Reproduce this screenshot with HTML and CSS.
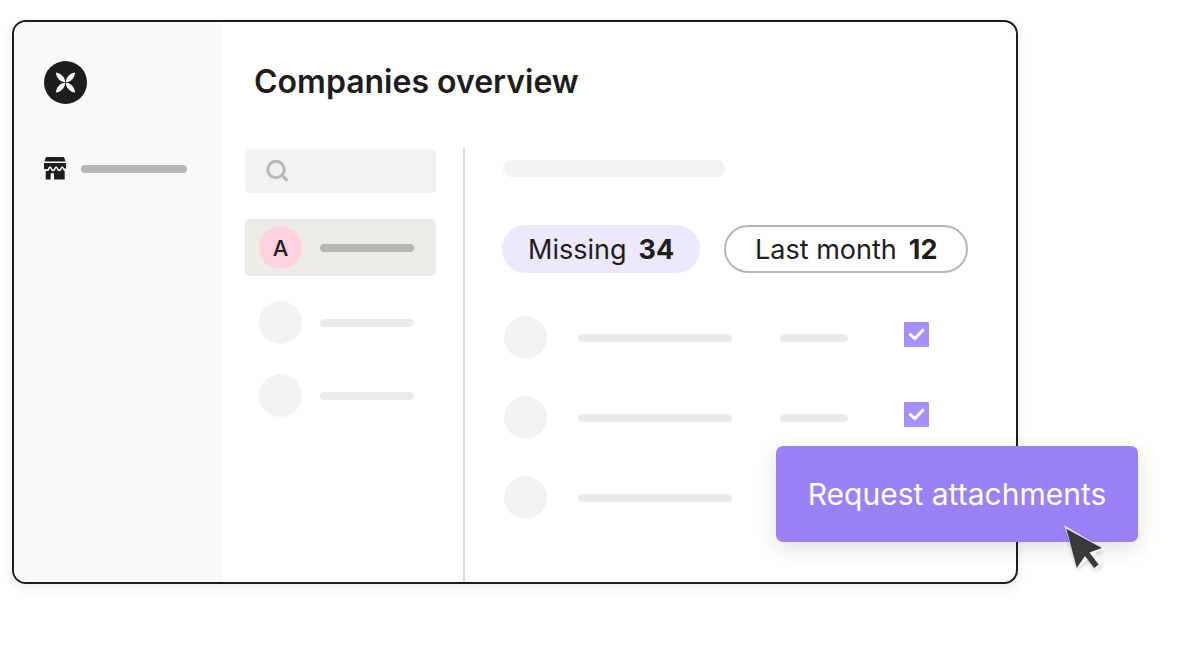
FILE: index.html
```
<!DOCTYPE html>
<html lang="en">
<head>
<meta charset="utf-8">
<title>Companies overview</title>
<link rel="stylesheet" href="styles.css">
</head>
<body>
<div class="window">
  <aside class="sidebar">
    <svg class="logo" viewBox="0 0 43 43" aria-hidden="true">
      <circle cx="21.500" cy="21.500" r="21.500" fill="#1d1d1b"/>
      <g fill="#fff">
        <path d="M21.200 21.200C21.200 16.800 17.500 12 11.900 11.400C12.300 16.900 16.600 21.200 21.200 21.200Z"/>
        <path d="M21.800 21.200C21.800 16.800 25.500 12 31.100 11.400C30.700 16.900 26.400 21.200 21.800 21.200Z"/>
        <path d="M21.200 21.800C21.200 26.200 17.500 31 11.900 31.600C12.300 26.100 16.600 21.800 21.200 21.800Z"/>
        <path d="M21.800 21.800C21.800 26.200 25.500 31 31.100 31.600C30.700 26.100 26.400 21.800 21.800 21.800Z"/>
      </g>
    </svg>
    <a class="nav-link" href="#" aria-label="Companies">
      <svg class="store" viewBox="0 0 22 23" aria-hidden="true">
        <g fill="#1d1d1b">
          <path d="M3 0H19Q20 0 20.400 1L21.500 4.500H0.500L1.600 1Q2 0 3 0Z"/>
          <path d="M0 6H22V11.500H20.200C19.500 8.800 17.200 8.900 16.400 11.300C15.800 13.200 14.700 13.200 14 11.300C13.200 8.900 11.200 8.900 10.300 11.300C9.600 13.200 8.600 13.200 7.900 11.300C7.100 8.900 4.900 8.900 4.100 11.300C3.700 12.600 2.900 12.800 2.100 12H0Z"/>
          <path d="M1.700 14C3.500 14.700 4.900 13.800 5.500 12C5.900 10.700 6.200 10.700 6.600 12C7.600 14.900 10.500 14.900 11.600 12C12.100 10.700 12.300 10.700 12.800 12C13.800 14.900 16.700 14.900 17.700 12C18.100 10.700 18.400 10.700 18.800 12C19.200 13.200 19.800 13.800 20.700 14V22.500H10V16.200H6.700V22.500H1.700Z"/>
        </g>
      </svg>
      <span class="bar bar-strong"></span>
    </a>
  </aside>
  <main class="main">
    <h1 class="title">Companies overview</h1>
    <div class="columns">
      <section class="companies">
        <label class="search">
          <svg class="search-icon" viewBox="0 0 24 24" aria-hidden="true">
            <circle cx="11" cy="10.500" r="8.200"/>
            <path d="M17.200 16.700L21.500 20.800"/>
          </svg>
          <input class="search-input" type="search" aria-label="Search companies">
        </label>
        <ul class="company-list">
          <li><button class="company company-active" type="button" aria-label="Company A"><span class="avatar avatar-pink">A</span><span class="bar bar-strong"></span></button></li>
          <li><button class="company" type="button" aria-label="Company 2"><span class="avatar"></span><span class="bar"></span></button></li>
          <li><button class="company" type="button" aria-label="Company 3"><span class="avatar"></span><span class="bar"></span></button></li>
        </ul>
      </section>
      <section class="detail">
        <div class="heading-bar"></div>
        <div class="filters">
          <button class="pill pill-active" type="button">Missing <b>34</b></button>
          <button class="pill" type="button">Last month <b>12</b></button>
        </div>
        <ul class="rows">
          <li class="row">
            <span class="avatar"></span><span class="bar"></span><span class="bar"></span>
            <span class="check"><input class="check-box" type="checkbox" aria-label="Select row 1" checked><svg class="check-mark" viewBox="0 0 25 25" aria-hidden="true"><path d="M6.300 12.500L10.800 16.600L18.800 8.200"/></svg></span>
          </li>
          <li class="row">
            <span class="avatar"></span><span class="bar"></span><span class="bar"></span>
            <span class="check"><input class="check-box" type="checkbox" aria-label="Select row 2" checked><svg class="check-mark" viewBox="0 0 25 25" aria-hidden="true"><path d="M6.300 12.500L10.800 16.600L18.800 8.200"/></svg></span>
          </li>
          <li class="row">
            <span class="avatar"></span><span class="bar"></span>
          </li>
        </ul>
      </section>
    </div>
  </main>
  <button class="request" type="button">Request attachments
    <svg class="cursor" viewBox="0 0 48 56" aria-hidden="true">
      <path d="M4 4L44 28L35.500 32L43 42.500L36 49L28.500 38L18 47Z" fill="#fff" fill-opacity="0.800"/>
      <path d="M6.300 7.700L42 27L29.500 31.500L38.600 43.500L34.200 47L25 35L16.800 46.700Z" fill="#373a39"/>
    </svg>
  </button>
</div>
</body>
</html>
```
FILE: styles.css
```
* {
  box-sizing: border-box;
}

body {
  margin: 0;
  padding: 20px 167px 84px 12px;
  background: #fff;
  color: #1d1d1b;
  font-family: Inter, "Liberation Sans", sans-serif;
}

button {
  font: inherit;
  color: inherit;
  border: 0;
  background: none;
  cursor: pointer;
}

ul {
  margin: 0;
  padding: 0;
  list-style: none;
}

.window {
  position: relative;
  display: flex;
  border: 2px solid #1d1d1b;
  border-radius: 14px;
  background: #fff;
  box-shadow: 0 4px 12px rgba(0, 0, 0, 0.08);
}

.sidebar {
  flex: 0 0 208px;
  padding: 39px 35px 0 30px;
  border-radius: 12px 0 0 12px;
  background: #f9f9f7;
}

.logo {
  display: block;
  width: 43px;
  height: 43px;
}

.nav-link {
  display: flex;
  align-items: center;
  gap: 15px;
  margin-top: 53px;
}

.store {
  flex: none;
  width: 22px;
  height: 23px;
}

.bar {
  flex: 1;
  height: 8px;
  border-radius: 4px;
  background: #ebece7;
}

.bar-strong {
  background: #b6b6b4;
}

.main {
  flex: 1;
  min-width: 0;
  padding-top: 40px;
}

.title {
  margin: 0 0 46px;
  padding-left: 32px;
  font-size: 32px;
  line-height: 40px;
  font-weight: 600;
}

.columns {
  display: flex;
}

.companies {
  flex: 0 0 243px;
  padding: 1px 27px 0 23px;
  border-right: 2px solid #dcdcdc;
}

.search {
  display: flex;
  align-items: center;
  gap: 12px;
  height: 44px;
  padding: 0 20px;
  border-radius: 5px;
  background: #f2f2f0;
}

.search-icon {
  flex: none;
  width: 24px;
  height: 24px;
  fill: none;
  stroke: #b6b6b4;
  stroke-width: 3;
  stroke-linecap: round;
}

.search-input {
  width: 100%;
  min-width: 0;
  border: 0;
  outline: 0;
  background: transparent;
  font: inherit;
  font-size: 16px;
}

.company-list {
  display: grid;
  gap: 16px;
  margin-top: 26px;
}

.company {
  display: flex;
  align-items: center;
  gap: 18px;
  width: 100%;
  height: 57px;
  padding: 4px 22px 0 14px;
  border-radius: 5px;
}

.company-active {
  padding-top: 0;
  background: #ebece7;
}

.avatar {
  display: grid;
  place-items: center;
  flex: none;
  width: 43px;
  height: 43px;
  border-radius: 50%;
  background: #f2f2f0;
  font-size: 22px;
  font-weight: 500;
}

.avatar-pink {
  background: #ffd2e0;
}

.detail {
  flex: 1;
  min-width: 0;
  height: 434px;
  padding: 12px 48px 0 37px;
}

.heading-bar {
  width: 222px;
  height: 17px;
  margin-left: 1px;
  border-radius: 9px;
  background: #f2f2f0;
}

.filters {
  display: flex;
  gap: 24px;
  margin-top: 48px;
}

.pill {
  display: flex;
  align-items: center;
  justify-content: center;
  gap: 12px;
  flex: 244 0 0;
  height: 48px;
  padding: 0;
  border: 2px solid #b6b6b4;
  border-radius: 24px;
  font-size: 27px;
  white-space: nowrap;
}

.pill-active {
  flex-grow: 198;
  border-color: #ede8fd;
  background: #ede8fd;
}

.rows {
  display: grid;
  gap: 37px;
  margin-top: 43px;
  padding: 0 39px 0 2px;
}

.row {
  display: grid;
  grid-template-columns: 43px 31px 154px 48px 68px 1fr 25px;
  align-items: center;
}

.row > :nth-child(2) {
  grid-column: 3;
}

.row > :nth-child(3) {
  grid-column: 5;
}

.check {
  grid-column: 7;
  display: grid;
  align-self: start;
  padding-top: 6px;
}

.check-box,
.check-mark {
  grid-area: 1 / 1;
  width: 25px;
  height: 25px;
  margin: 0;
}

.check-box {
  appearance: none;
  border-radius: 1px;
  background: #a68efc;
}

.check-mark {
  fill: none;
  stroke: #fff;
  stroke-width: 3;
  stroke-linecap: round;
  stroke-linejoin: round;
  pointer-events: none;
}

.request {
  position: absolute;
  right: -122px;
  bottom: 40px;
  width: 362px;
  height: 96px;
  padding: 0;
  border-radius: 7px;
  background: #9a82f6;
  box-shadow: 0 6px 20px rgba(40, 40, 20, 0.14);
  color: #fff;
  font-size: 30px;
  white-space: nowrap;
}

.cursor {
  position: absolute;
  right: 30px;
  bottom: -35px;
  width: 48px;
  height: 56px;
  filter: drop-shadow(0 2px 2px rgba(0, 0, 0, 0.2));
}
```
